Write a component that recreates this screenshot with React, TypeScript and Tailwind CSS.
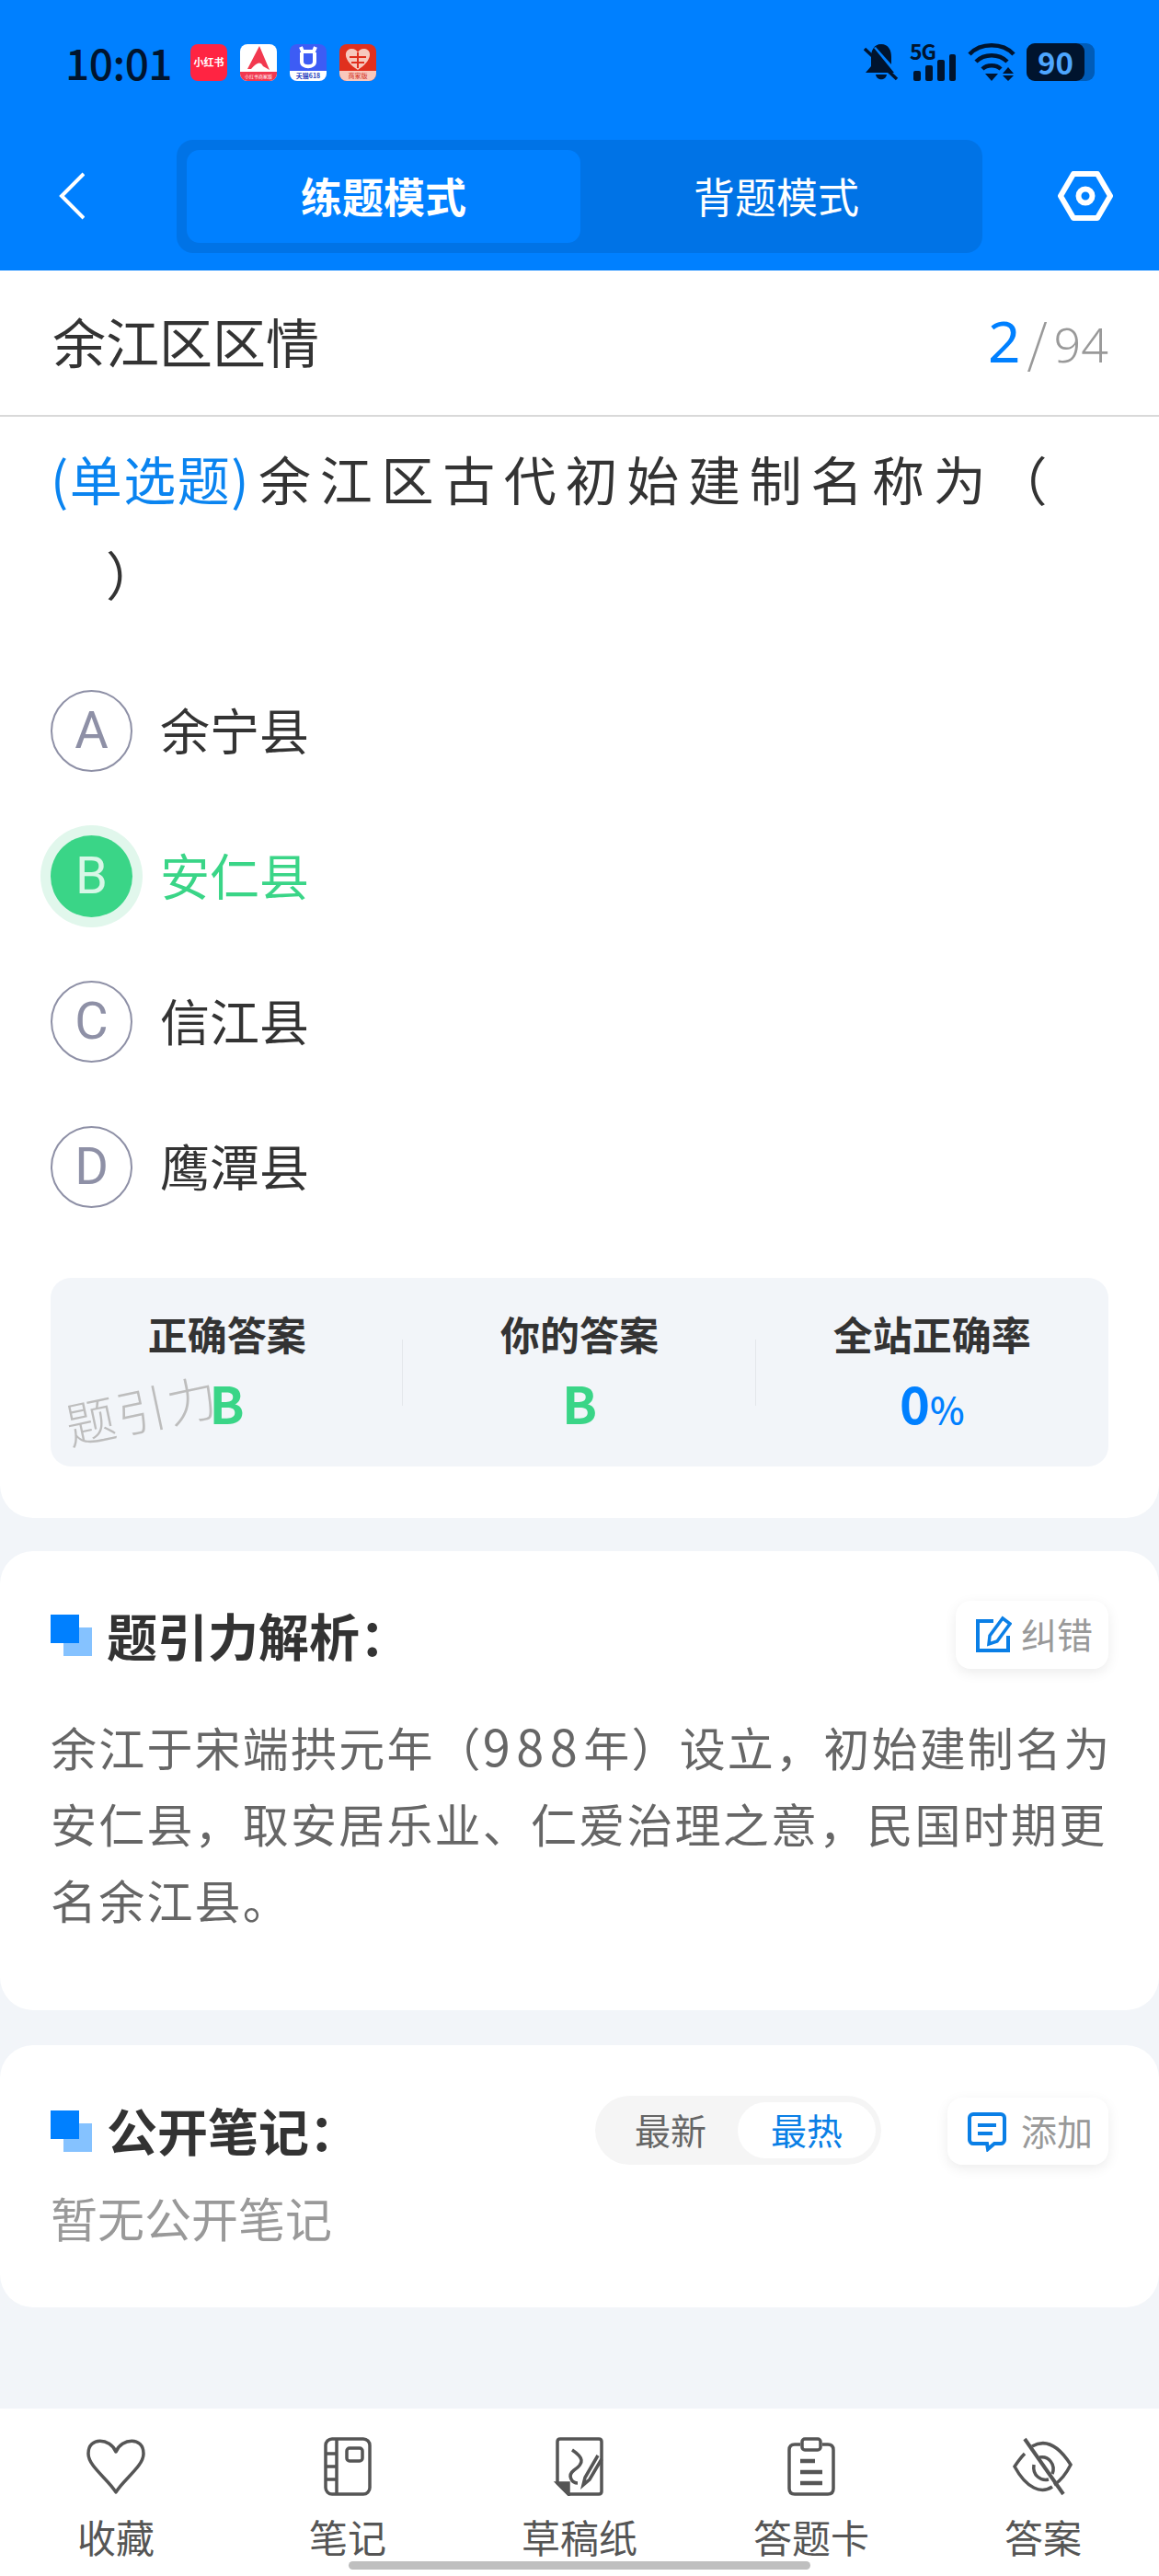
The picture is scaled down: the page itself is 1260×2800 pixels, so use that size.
import React from "react";

const FONT = '"Noto Sans CJK SC", "Noto Sans", sans-serif';

function AppIcons() {
  return (
    <div className="ml-[22px] flex gap-[14px]">
      <div className="flex h-[40px] w-[40px] items-center justify-center rounded-[8px] bg-[#ff2442] text-[11px] leading-none font-bold whitespace-nowrap text-white">
        小红书
      </div>
      <div className="flex h-[40px] w-[40px] flex-col overflow-hidden rounded-[8px] bg-white">
        <svg viewBox="0 0 40 30" className="h-[30px] w-[40px]">
          <path d="M21 2 L32 28 L25 24 C22 18 18 20 12 27 L8 27 Z" fill="#f2384f" />
        </svg>
        <div className="flex flex-1 items-center justify-center bg-[#f2384f] text-[5px] leading-none whitespace-nowrap text-white">
          小红书商家版
        </div>
      </div>
      <div className="flex h-[40px] w-[40px] flex-col overflow-hidden rounded-[8px] bg-[#3d5cf5]">
        <svg viewBox="0 0 40 29" className="h-[29px] w-[40px]">
          <path d="M12 3 L14 8 H26 L28 3 M13 9 V19 C13 26 27 26 27 19 V9" fill="none" stroke="#fff" strokeWidth="4" />
        </svg>
        <div className="flex flex-1 items-center justify-center bg-white text-[7px] leading-none font-bold whitespace-nowrap text-[#2a3fc0]">
          天猫618
        </div>
      </div>
      <div className="flex h-[40px] w-[40px] flex-col overflow-hidden rounded-[8px] bg-[#e0301e]">
        <svg viewBox="0 0 40 29" className="h-[29px] w-[40px]">
          <path d="M20 28 C4 18 4 6 13 5 C17 5 19 7 20 9 C21 7 23 5 27 5 C36 6 36 18 20 28 Z" fill="#f7c9bd" />
          <path d="M20 9 V26 M11 14 H29 M13 20 H27" stroke="#e0301e" strokeWidth="2" />
        </svg>
        <div className="flex flex-1 items-center justify-center bg-[#f9c8bc] text-[7px] leading-none whitespace-nowrap text-[#d02a1a]">
          商家版
        </div>
      </div>
    </div>
  );
}

function StatusIcons() {
  return (
    <div className="flex items-start">
      <svg viewBox="0 0 38 41" className="h-[41px] w-[38px]" fill="#00142e">
        <path d="M19 1 C11 1 8 8 8 15 L8 25 L2 32 H33 L11 5 Z" />
        <path d="M13 4 C15 2 17 1 19 1 C27 1 30 8 30 15 V23 Z" />
        <path d="M13 34 H25 C24 41 14 41 13 34 Z" />
        <path d="M1 6 L36 39" stroke="#00142e" strokeWidth="3.5" />
      </svg>
      <div className="relative ml-[12px] h-[41px] w-[50px]">
        <span className="absolute top-[-4px] left-0 text-[23px] leading-[24px] font-bold tracking-[-1px] text-[#00142e]">5G</span>
        <div className="absolute right-0 bottom-0 flex items-end gap-[5px]">
          <div className="h-[11px] w-[8px] rounded-[2px] bg-[#00142e]" />
          <div className="h-[17px] w-[8px] rounded-[2px] bg-[#00142e]" />
          <div className="h-[23px] w-[8px] rounded-[2px] bg-[#00142e]" />
          <div className="h-[29px] w-[7px] rounded-[2px] bg-[#00142e]" />
        </div>
      </div>
      <svg viewBox="0 0 52 41" className="ml-[13px] h-[41px] w-[52px]" fill="none" stroke="#00142e" strokeWidth="4.5">
        <path d="M2 12 C14 -1 38 -1 50 12" />
        <path d="M9 20 C18 11 34 11 43 20" />
        <path d="M16 28 C21 23 31 23 36 28" />
        <path d="M19 33 H33 L26 41 Z" fill="#00142e" stroke="none" />
        <path d="M44 26 L50 33 H38 Z M38 35 H50 L44 41 Z" fill="#00142e" stroke="none" />
      </svg>
      <div className="ml-[12px] flex h-[41px] w-[74px] items-center rounded-[9px] bg-[#005cb8]">
        <div className="flex h-full w-[63px] items-center justify-center rounded-[9px] bg-[#00142e] text-[33px] leading-none font-semibold text-[#4da6ff]">
          90
        </div>
      </div>
    </div>
  );
}

function SectionMark() {
  return (
    <div className="relative h-[45px] w-[45px] shrink-0">
      <div className="absolute top-[14px] left-[14px] h-[31px] w-[31px] bg-[#85c2ff]" />
      <div className="absolute top-0 left-0 h-[31px] w-[31px] bg-[#0080ff]" />
    </div>
  );
}

const options = [
  { key: "A", text: "余宁县" },
  { key: "B", text: "安仁县", selected: true },
  { key: "C", text: "信江县" },
  { key: "D", text: "鹰潭县" },
];

function Option({ letter, text, selected }: { letter: string; text: string; selected?: boolean }) {
  return (
    <div className="flex h-[158px] items-center">
      {selected ? (
        <div className="flex h-[89px] w-[89px] items-center justify-center rounded-full bg-[#3ad587] font-['Roboto'] text-[56px] text-[#d8f7e7] shadow-[0_0_0_11px_#e1f7ec]">
          {letter}
        </div>
      ) : (
        <div className="flex h-[89px] w-[89px] items-center justify-center rounded-full border-[2px] border-[#8e90a6] font-['Roboto'] text-[56px] text-[#8e90a6]">
          {letter}
        </div>
      )}
      <span className={selected ? "mb-[3px] ml-[30px] text-[54px] text-[#3ad587]" : "mb-[3px] ml-[30px] text-[54px] text-[#333333]"}>
        {text}
      </span>
    </div>
  );
}

function NavHeart() {
  return (
    <svg viewBox="0 0 64 64" className="h-[64px] w-[64px]" fill="none" stroke="#555555" strokeWidth="3.5">
      <path d="M32 60 C24 46 2 32 2 18 C2 -1 26 1 32 16 C38 1 62 -1 62 18 C62 32 40 46 32 60 Z" strokeLinejoin="round" />
    </svg>
  );
}

function NavNotebook() {
  return (
    <svg viewBox="0 0 64 64" className="h-[64px] w-[64px]" fill="none" stroke="#555555" strokeWidth="3.5">
      <rect x="8" y="2" width="48" height="60" rx="7" />
      <path d="M20 2 V62 M8 18 H20 M8 32 H20 M8 46 H20" />
      <rect x="31" y="12" width="17" height="14" rx="3" />
    </svg>
  );
}

function NavDraft() {
  return (
    <svg viewBox="0 0 64 64" className="h-[64px] w-[64px]" fill="none" stroke="#555555" strokeWidth="3.5">
      <path d="M8 50 V5 C8 3 9 2 11 2 H53 C55 2 56 3 56 5 V59 C56 61 55 62 53 62 H20 Z" />
      <path d="M8 50 H20 V62 Z" fill="#555555" />
      <path d="M24 14 C36 22 38 28 26 36 C18 42 24 50 30 50" />
      <path d="M52 20 L38 44 L36 52 L43 46 L56 24" />
    </svg>
  );
}

function NavCard() {
  return (
    <svg viewBox="0 0 64 64" className="h-[64px] w-[64px]" fill="none" stroke="#555555" strokeWidth="3.5">
      <path d="M20 8 H14 C10 8 8 10 8 14 V56 C8 60 10 62 14 62 H50 C54 62 56 60 56 56 V14 C56 10 54 8 50 8 H44" />
      <rect x="22" y="2" width="20" height="12" rx="3" />
      <path d="M20 26 H36 M20 38 H44 M20 50 H44" strokeWidth="4.5" />
    </svg>
  );
}

function NavEyeOff() {
  return (
    <svg viewBox="0 0 68 64" className="h-[64px] w-[68px]" fill="none" stroke="#555555" strokeWidth="3.5">
      <path d="M22 10 C36 2 50 8 64 30 C58 42 52 48 46 52 M14 18 C10 22 7 26 3 32 C16 56 32 62 44 54" />
      <path d="M30 22 C40 20 48 30 44 40 M24 30 C22 42 32 48 40 46" />
      <path d="M14 2 L56 62" strokeWidth="4" />
    </svg>
  );
}

const navItems = [
  { label: "收藏", icon: <NavHeart /> },
  { label: "笔记", icon: <NavNotebook /> },
  { label: "草稿纸", icon: <NavDraft /> },
  { label: "答题卡", icon: <NavCard /> },
  { label: "答案", icon: <NavEyeOff /> },
];

export default function App() {
  return (
    <div className="flex h-[2800px] w-[1260px] flex-col bg-[#f2f5f9]" style={{ fontFamily: FONT }}>
      {/* Header */}
      <div className="h-[294px] shrink-0 bg-[#0080ff]">
        <div className="flex h-[152px] items-start justify-between pt-[47px] pr-[70px] pl-[71px]">
          <div className="flex items-center">
            <span className="w-[114px] text-[46px] leading-[41px] font-medium tracking-[-0.5px] text-[#00142e]">10:01</span>
            <AppIcons />
          </div>
          <StatusIcons />
        </div>
        <div className="flex items-center pl-[64px]">
          <svg viewBox="0 0 28 52" className="mb-[2px] h-[52px] w-[28px]" fill="none" stroke="#fff" strokeWidth="4">
            <path d="M27 2 L3 26 L27 50" />
          </svg>
          <div className="ml-[100px] flex h-[123px] w-[876px] rounded-[18px] bg-[#0073e6] p-[11px]">
            <div className="flex w-[428px] items-center justify-center rounded-[14px] bg-[#0080ff] pb-[2px] text-[45px] font-bold text-white">
              练题模式
            </div>
            <div className="flex flex-1 items-center justify-center pb-[2px] text-[45px] text-white">背题模式</div>
          </div>
          <svg viewBox="0 0 60 54" className="mb-[2px] ml-[82px] h-[54px] w-[60px]" fill="none" stroke="#fff" strokeWidth="6">
            <path d="M17 3 H43 L57 27 L43 51 H17 L3 27 Z" strokeLinejoin="round" />
            <circle cx="30" cy="27" r="7.5" />
          </svg>
        </div>
      </div>

      {/* Title row */}
      <div className="flex h-[159px] shrink-0 items-center justify-between border-b-[2px] border-[#d9d9d9] bg-white pr-[55px] pl-[57px]">
        <span className="mb-[4px] text-[58px] text-[#333333]">余江区区情</span>
        <div className="mb-[4px] flex items-baseline">
          <span className="text-[62px] text-[#0080ff]" style={{ fontFamily: '"Noto Sans", sans-serif' }}>2</span>
          <span className="ml-[7px] text-[56px] font-light text-[#999999]">/</span>
          <span className="ml-[7px] text-[52px] font-light text-[#999999]" style={{ fontFamily: '"Noto Sans", sans-serif' }}>94</span>
        </div>
      </div>

      {/* Question card */}
      <div className="h-[1197px] shrink-0 rounded-b-[36px] bg-white px-[55px] pt-[15px]">
        <div className="text-[57px] leading-[103px] text-[#333333]">
          <span className="tracking-[1.5px] text-[#0a84f0]">(单选题)</span>
          <span className="ml-[9px] tracking-[9.7px]">
            余江区古代初始建制名称为（
            <br />
            <span className="ml-[60px]">）</span>
          </span>
        </div>
        <div className="mt-[41px]">
          {options.map((o) => (
            <Option key={o.key} letter={o.key} text={o.text} selected={o.selected} />
          ))}
        </div>
        <div className="mt-[42px] grid h-[205px] grid-cols-3 rounded-[22px] bg-[#f2f5f9]">
          <div className="relative flex flex-col items-center pt-[30px]">
            <span className="text-[43px] leading-[60px] font-bold text-[#333333]">正确答案</span>
            <span className="mt-[10px] text-[56px] leading-[70px] font-bold text-[#3ad587]">B</span>
            <span className="absolute top-[112px] left-[15px] -rotate-[12deg] text-[54px] leading-[60px] font-light tracking-[2px] text-[#bdbdbd]">
              题引力
            </span>
            <div className="absolute top-[67px] right-0 h-[72px] w-[1px] bg-[#e4e7eb]" />
          </div>
          <div className="relative flex flex-col items-center pt-[30px]">
            <span className="text-[43px] leading-[60px] font-bold text-[#333333]">你的答案</span>
            <span className="mt-[10px] text-[56px] leading-[70px] font-bold text-[#3ad587]">B</span>
            <div className="absolute top-[67px] right-0 h-[72px] w-[1px] bg-[#e4e7eb]" />
          </div>
          <div className="flex flex-col items-center pt-[30px]">
            <span className="text-[43px] leading-[60px] font-bold text-[#333333]">全站正确率</span>
            <span className="mt-[10px] leading-[70px] font-bold text-[#0080ff]">
              <span className="text-[56px]">0</span>
              <span className="text-[40px] font-medium">%</span>
            </span>
          </div>
        </div>
      </div>

      {/* Analysis card */}
      <div className="mt-[36px] h-[499px] shrink-0 rounded-[36px] bg-white px-[55px]">
        <div className="flex h-[128px] items-end justify-between">
          <div className="flex items-center">
            <SectionMark />
            <span className="mb-[3px] ml-[16px] text-[55px] leading-[70px] font-bold text-[#333333]">题引力解析：</span>
          </div>
          <div className="flex h-[74px] w-[166px] items-center justify-center rounded-[16px] bg-white pl-[4px] shadow-[0_4px_14px_rgba(0,0,0,0.08)]">
            <svg viewBox="0 0 40 42" className="h-[42px] w-[40px]" fill="none" stroke="#0a7fe6" strokeWidth="4">
              <path d="M20 6 H3 V38 H36 V22" />
              <path d="M30 3 L38 9 L24 28 L15 31 L16 22 Z" strokeWidth="3.5" />
            </svg>
            <span className="mb-[3px] ml-[10px] text-[39px] text-[#999999]">纠错</span>
          </div>
        </div>
        <p className="mt-[43px] -mr-[12px] text-[50px] leading-[83px] tracking-[2.2px] text-[#666666]">
          余江于宋端拱元年（<span className="text-[54px] leading-none tracking-[6.5px]">988</span>年）设立，初始建制名为安仁县，取安居乐业、仁爱治理之意，民国时期更名余江县。
        </p>
      </div>

      {/* Notes card */}
      <div className="mt-[38px] h-[285px] shrink-0 rounded-[36px] bg-white px-[55px]">
        <div className="flex h-[130px] items-end">
          <div className="flex items-center">
            <SectionMark />
            <span className="mb-[4px] ml-[16px] text-[55px] leading-[70px] font-bold text-[#333333]">公开笔记：</span>
          </div>
          <div className="ml-auto flex h-[75px] w-[311px] items-center rounded-full bg-[#f5f5f5] pr-[6px] pl-[43px]">
            <span className="mb-[3px] text-[39px] text-[#666666]">最新</span>
            <div className="ml-auto flex h-[61px] w-[150px] items-center justify-center rounded-full bg-white pb-[3px] text-[39px] text-[#0a7fe6]">
              最热
            </div>
          </div>
          <div className="ml-[72px] flex h-[73px] w-[175px] items-center justify-center rounded-[16px] bg-white pl-[4px] shadow-[0_4px_14px_rgba(0,0,0,0.08)]">
            <svg viewBox="0 0 44 44" className="h-[44px] w-[44px]" fill="none" stroke="#0a7fe6" strokeWidth="4">
              <path d="M7 3 H37 C39 3 41 5 41 7 V31 C41 33 39 35 37 35 H30 L23 41 L22 35 H7 C5 35 3 33 3 31 V7 C3 5 5 3 7 3 Z" />
              <path d="M12 15 H32 M12 24 H28" />
            </svg>
            <span className="mb-[3px] ml-[15px] text-[39px] text-[#999999]">添加</span>
          </div>
        </div>
        <p className="mt-[22px] text-[51px] leading-[70px] text-[#999999]">暂无公开笔记</p>
      </div>

      {/* Bottom nav */}
      <div className="mt-auto flex h-[182px] shrink-0 flex-col bg-white">
        <div className="grid grid-cols-5 pt-[31px]">
          {navItems.map((item) => (
            <div key={item.label} className="flex flex-col items-center">
              {item.icon}
              <span className="mt-[19px] text-[42px] leading-[50px] text-[#555555]">{item.label}</span>
            </div>
          ))}
        </div>
        <div className="mx-auto mt-[2px] h-[9px] w-[502px] rounded-full bg-[#bfbfbf]" />
      </div>
    </div>
  );
}
